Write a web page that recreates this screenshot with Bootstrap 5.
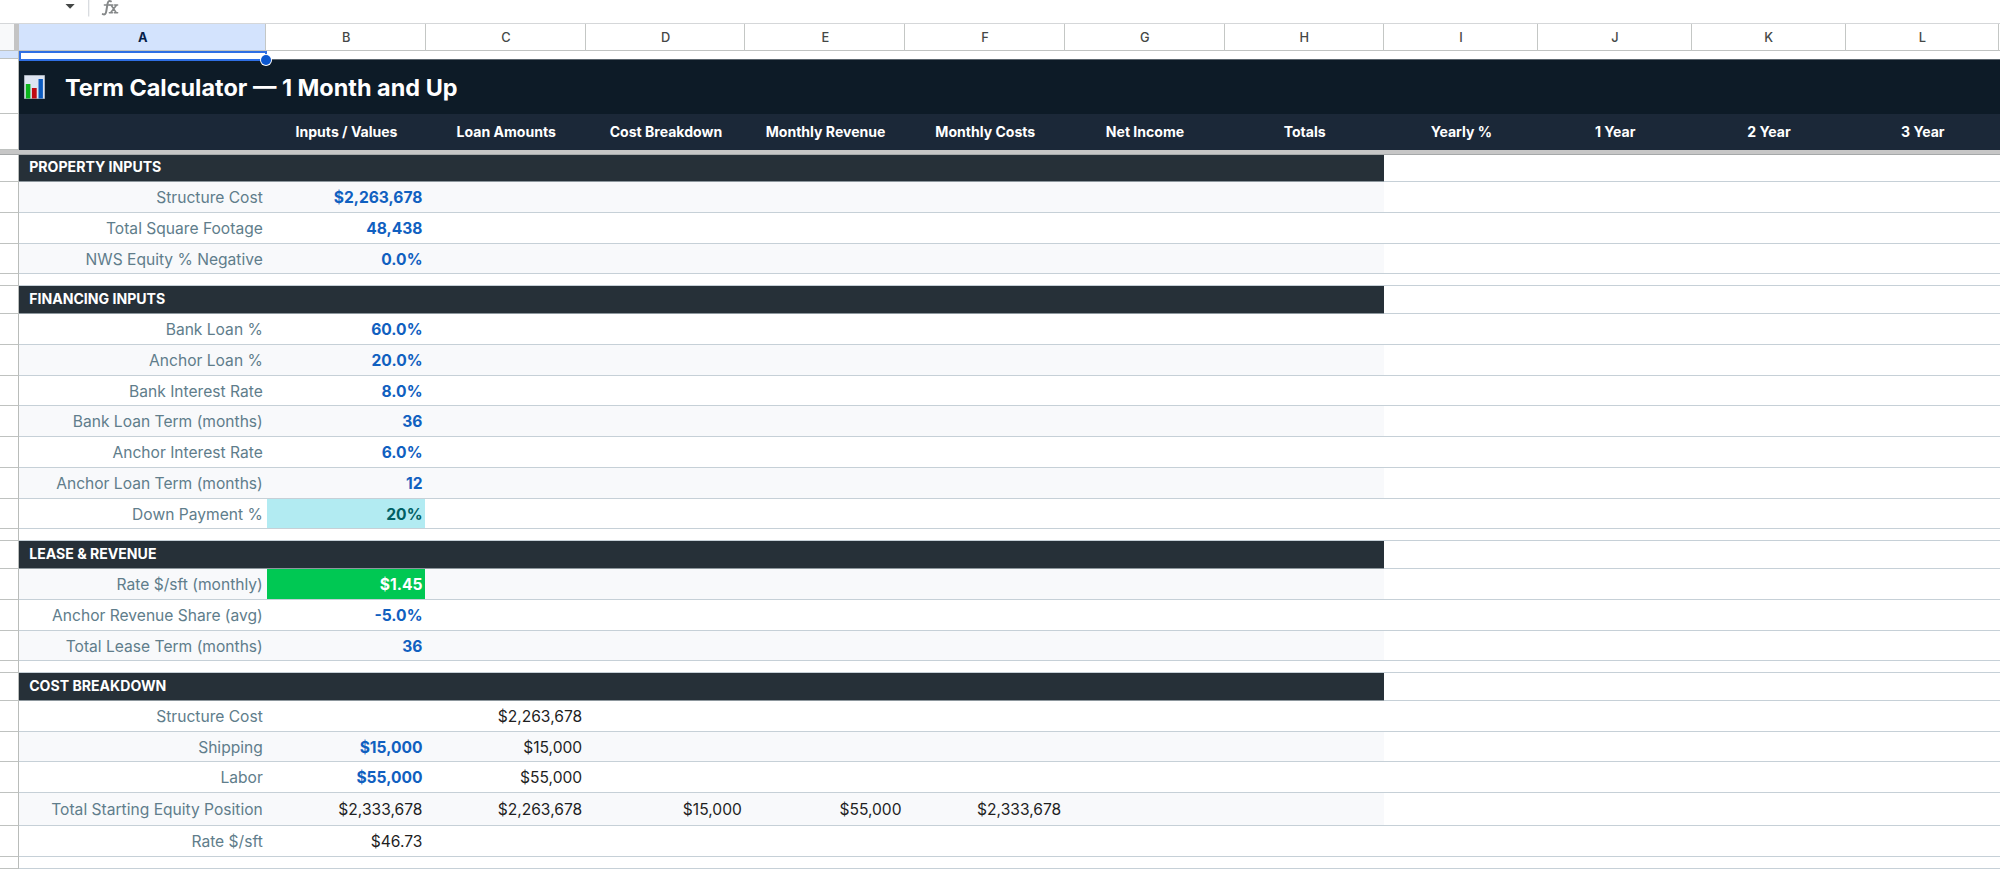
<!DOCTYPE html>
<html lang="en">
<head>
<meta charset="utf-8">
<title>Term Calculator</title>
<link href="https://cdn.jsdelivr.net/npm/bootstrap@5.3.0/dist/css/bootstrap.min.css" rel="stylesheet">
<style>
  body { font-family: Inter, "Liberation Sans", sans-serif; font-size: 15.6px; line-height: 1; color: #1f1f1f; overflow: hidden; background: #fff; }
  .sheet { width: 2000px; height: 869px; }
  .formula-bar { height: 23px; }
  .letters { height: 28px; border-top: 1px solid #d5d7d9; font-size: 12.8px; font-weight: 500; color: #444746; }
  .letters > div { border-right: 1.5px solid #c4c7c5; border-bottom: 1px solid #c0c3c2; display: flex; align-items: center; justify-content: center; padding-top: 2px; padding-left: 1px; }
  .corner { width: 19px; background: #f8f9fa; border-right: 5px solid #c4c4c4 !important; }
  .letters .picked { background: #d3e3fd; color: #041e49; font-weight: 700; }
  .col-a { width: 247.4px; flex: none; }
  .col-n { width: 159.7px; flex: none; }
  .col-y { width: 153.8px; flex: none; }
  .line { display: flex; flex: none; }
  .num { width: 19px; flex: none; border-right: 1px solid #b9bcba; border-bottom: 1px solid #bfc2c0; }
  .band { width: 1365.4px; flex: none; display: flex; border-bottom: 1px solid #c6d0d7; }
  .rest { flex: 1; border-bottom: 1px solid #c6d0d7; }
  .alt .band { background: #f8f9fb; }
  .band > div { display: flex; align-items: center; justify-content: flex-end; padding-right: 3.6px; padding-top: 2.2px; white-space: nowrap; }
  .band > .col-a { color: #607d8b; }
  .band > .input { color: #1060c0; font-weight: 700; }
  .band > .down { background: #b2ebf2; color: #006064; }
  .band > .rate { background: #00c853; color: #fff; }
  .band > .down, .band > .rate { width: 158.2px; margin-left: .6px; margin-right: .9px; padding-right: 2.7px; }
  .band > .heading { color: #fff; font-weight: 700; font-size: 14.1px; padding-left: 10.2px; padding-top: 0; padding-bottom: 1px; }
  .section .band { background: #263038; border-bottom-color: #8d979d; }
  .h31 { height: 31px; } .h30 { height: 30px; } .h33 { height: 33px; } .h28 { height: 28px; } .h27 { height: 27px; } .h12 { height: 12px; }
  .picked-row { height: 8px; }
  .picked-row .num { background: #d3e3fd; }
  .selection { width: 248px; height: 10px; border: 2px solid #2f6fe4; background: #fff; position: relative; z-index: 2; flex: none; }
  .handle { position: absolute; right: -6px; bottom: -6px; width: 10px; height: 10px; border-radius: 50%; background: #0b57d0; box-shadow: 0 0 0 1px #fff; }
  .title-row { height: 55px; }
  .title-fill { background: #0d1b27; color: #fff; flex: 1; display: flex; align-items: center; padding-left: 5px; border-top: 1px solid #5c666e; }
  .title-fill h1 { font-size: 23.45px; font-weight: 700; margin: 1px 0 0 20px; line-height: 1; white-space: nowrap; }
  .names-row { height: 36px; }
  .names { background: #1b2838; color: #fff; flex: 1; display: flex; font-weight: 700; font-size: 14.05px; }
  .names > div { display: flex; align-items: center; justify-content: center; white-space: nowrap; padding-left: .6px; }
  .freeze { height: 5px; background: #c6c6c6; border-bottom: 1px solid #a5a8a9; }
</style>
</head>
<body>
<main class="sheet d-flex flex-column">
  <div class="formula-bar d-flex">
    <svg width="140" height="23" viewBox="0 0 140 23" role="img" aria-label="Formula bar">
      <path d="M65.5 4h9.2l-4.6 4.7z" fill="#444746"/>
      <path d="M88.7 0v16.5" stroke="#d5d9dd" stroke-width="1.2"/>
      <g fill="none" stroke="#858889" stroke-width="2" stroke-linecap="round">
        <path d="M102.8 14.1c2 1 3-.4 3.4-2.5l1.4-8c.4-2.3 1.5-3.1 3.3-2.3"/>
        <path d="M104.4 5h5.4" stroke-width="1.5"/>
        <path d="M110 5h2.8M114.6 5h3M109.4 12.8h3M114.4 12.8h3.2M111.2 5.2l5 7.4M116.4 5.2l-5.6 7.4" stroke-width="1.6"/>
      </g>
    </svg>
  </div>
  <div class="letters d-flex">
    <div class="corner flex-shrink-0"></div>
    <div class="col-a picked">A</div><div class="col-n">B</div><div class="col-n">C</div><div class="col-n">D</div><div class="col-n">E</div><div class="col-n">F</div><div class="col-n">G</div><div class="col-n">H</div><div class="col-y">I</div><div class="col-y">J</div><div class="col-y">K</div><div class="col-y">L</div><div class="flex-fill"></div>
  </div>
  <div class="line picked-row"><div class="num"></div><div class="selection"><span class="handle"></span></div></div>
  <div class="line title-row"><div class="num"></div>
    <div class="title-fill">
      <svg width="21" height="24" viewBox="0 0 21 24" aria-hidden="true"><path d="M.5.5h20v23H.5z" fill="#dde5f2" stroke="#a9b2bd"/><path d="M1.8 9h4.6v14.5H1.8z" fill="#0bb51c"/><path d="M7.9 13h4.8v10.5H7.9z" fill="#c00a12"/><path d="M14.5 4h4.4v19.5h-4.4z" fill="#0b5bc0"/></svg>
      <h1>Term Calculator — 1 Month and Up</h1>
    </div></div>
  <div class="line names-row"><div class="num"></div>
    <div class="names"><div class="col-a"></div><div class="col-n">Inputs / Values</div><div class="col-n">Loan Amounts</div><div class="col-n">Cost Breakdown</div><div class="col-n">Monthly Revenue</div><div class="col-n">Monthly Costs</div><div class="col-n">Net Income</div><div class="col-n">Totals</div><div class="col-y">Yearly %</div><div class="col-y">1 Year</div><div class="col-y">2 Year</div><div class="col-y">3 Year</div></div></div>
  <div class="freeze flex-shrink-0"></div>

  <div class="line section h27"><div class="num"></div><div class="band"><div class="heading">PROPERTY INPUTS</div></div><div class="rest"></div></div>
  <div class="line alt h31"><div class="num"></div><div class="band"><div class="col-a">Structure Cost</div><div class="col-n input">$2,263,678</div></div><div class="rest"></div></div>
  <div class="line h31"><div class="num"></div><div class="band"><div class="col-a">Total Square Footage</div><div class="col-n input">48,438</div></div><div class="rest"></div></div>
  <div class="line alt h30"><div class="num"></div><div class="band"><div class="col-a">NWS Equity % Negative</div><div class="col-n input">0.0%</div></div><div class="rest"></div></div>
  <div class="line h12"><div class="num"></div><div class="band"></div><div class="rest"></div></div>
  <div class="line section h28"><div class="num"></div><div class="band"><div class="heading">FINANCING INPUTS</div></div><div class="rest"></div></div>
  <div class="line h31"><div class="num"></div><div class="band"><div class="col-a">Bank Loan %</div><div class="col-n input">60.0%</div></div><div class="rest"></div></div>
  <div class="line alt h31"><div class="num"></div><div class="band"><div class="col-a">Anchor Loan %</div><div class="col-n input">20.0%</div></div><div class="rest"></div></div>
  <div class="line h30"><div class="num"></div><div class="band"><div class="col-a">Bank Interest Rate</div><div class="col-n input">8.0%</div></div><div class="rest"></div></div>
  <div class="line alt h31"><div class="num"></div><div class="band"><div class="col-a">Bank Loan Term (months)</div><div class="col-n input">36</div></div><div class="rest"></div></div>
  <div class="line h31"><div class="num"></div><div class="band"><div class="col-a">Anchor Interest Rate</div><div class="col-n input">6.0%</div></div><div class="rest"></div></div>
  <div class="line alt h31"><div class="num"></div><div class="band"><div class="col-a">Anchor Loan Term (months)</div><div class="col-n input">12</div></div><div class="rest"></div></div>
  <div class="line h30"><div class="num"></div><div class="band"><div class="col-a">Down Payment %</div><div class="col-n input down">20%</div></div><div class="rest"></div></div>
  <div class="line h12"><div class="num"></div><div class="band"></div><div class="rest"></div></div>
  <div class="line section h28"><div class="num"></div><div class="band"><div class="heading">LEASE &amp; REVENUE</div></div><div class="rest"></div></div>
  <div class="line alt h31"><div class="num"></div><div class="band"><div class="col-a">Rate $/sft (monthly)</div><div class="col-n input rate">$1.45</div></div><div class="rest"></div></div>
  <div class="line h31"><div class="num"></div><div class="band"><div class="col-a">Anchor Revenue Share (avg)</div><div class="col-n input">-5.0%</div></div><div class="rest"></div></div>
  <div class="line alt h30"><div class="num"></div><div class="band"><div class="col-a">Total Lease Term (months)</div><div class="col-n input">36</div></div><div class="rest"></div></div>
  <div class="line h12"><div class="num"></div><div class="band"></div><div class="rest"></div></div>
  <div class="line section h28"><div class="num"></div><div class="band"><div class="heading">COST BREAKDOWN</div></div><div class="rest"></div></div>
  <div class="line h31"><div class="num"></div><div class="band"><div class="col-a">Structure Cost</div><div class="col-n"></div><div class="col-n">$2,263,678</div></div><div class="rest"></div></div>
  <div class="line alt h30"><div class="num"></div><div class="band"><div class="col-a">Shipping</div><div class="col-n input">$15,000</div><div class="col-n">$15,000</div></div><div class="rest"></div></div>
  <div class="line h31"><div class="num"></div><div class="band"><div class="col-a">Labor</div><div class="col-n input">$55,000</div><div class="col-n">$55,000</div></div><div class="rest"></div></div>
  <div class="line alt h33"><div class="num"></div><div class="band"><div class="col-a">Total Starting Equity Position</div><div class="col-n">$2,333,678</div><div class="col-n">$2,263,678</div><div class="col-n">$15,000</div><div class="col-n">$55,000</div><div class="col-n">$2,333,678</div></div><div class="rest"></div></div>
  <div class="line h31"><div class="num"></div><div class="band"><div class="col-a">Rate $/sft</div><div class="col-n">$46.73</div></div><div class="rest"></div></div>
  <div class="line h12"><div class="num"></div><div class="band"></div><div class="rest"></div></div>
</main>
<script src="https://cdn.jsdelivr.net/npm/bootstrap@5.3.0/dist/js/bootstrap.bundle.min.js"></script>
</body>
</html>
